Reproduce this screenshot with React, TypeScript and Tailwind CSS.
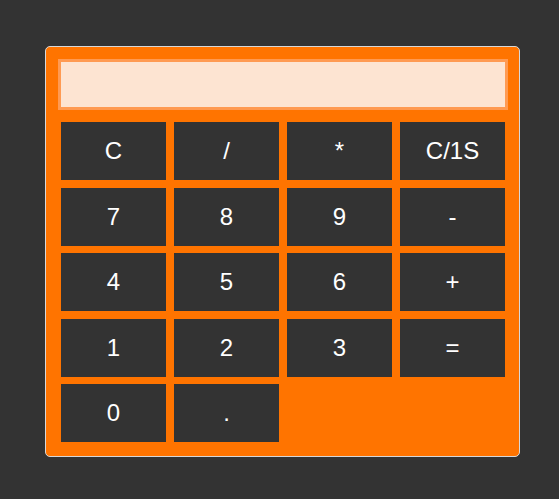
import React, { useState } from 'react';

const KEYS = ['C', '/', '*', 'C/1S', '7', '8', '9', '-', '4', '5', '6', '+', '1', '2', '3', '=', '0', '.'];

export default function App() {
  const [value, setValue] = useState('');

  const press = (k: string) => {
    if (k === 'C') setValue('');
    else if (k === 'C/1S') setValue(v => v.slice(0, -1));
    else if (k === '=') {
      try {
        // eslint-disable-next-line no-new-func
        setValue(String(Function(`return (${value})`)()));
      } catch {
        setValue('Error');
      }
    } else setValue(v => v + k);
  };

  return (
    <div className="min-h-screen bg-[#333333] pt-[46px] pl-[45px]" style={{ fontFamily: '"Liberation Sans", Arial, sans-serif' }}>
      <div className="w-[475px] h-[411px] bg-[#ff7400] border border-[#d8d8d8] rounded-[5px] p-[12px]">
        <input
          value={value}
          readOnly
          className="block w-[450px] h-[51px] bg-[#fde4d2] border-[3px] border-[#ff9a52] outline-none px-2 text-[24px] text-right text-[#333]"
        />
        <div className="mt-[12px] px-[3px] grid grid-cols-[repeat(4,105px)] auto-rows-[58px] gap-x-[8px] gap-y-[7.5px]">
          {KEYS.map(k => (
            <button
              key={k}
              onClick={() => press(k)}
              className="bg-[#333333] text-white text-[24px] leading-none flex items-center justify-center"
            >
              {k}
            </button>
          ))}
        </div>
      </div>
    </div>
  );
}
